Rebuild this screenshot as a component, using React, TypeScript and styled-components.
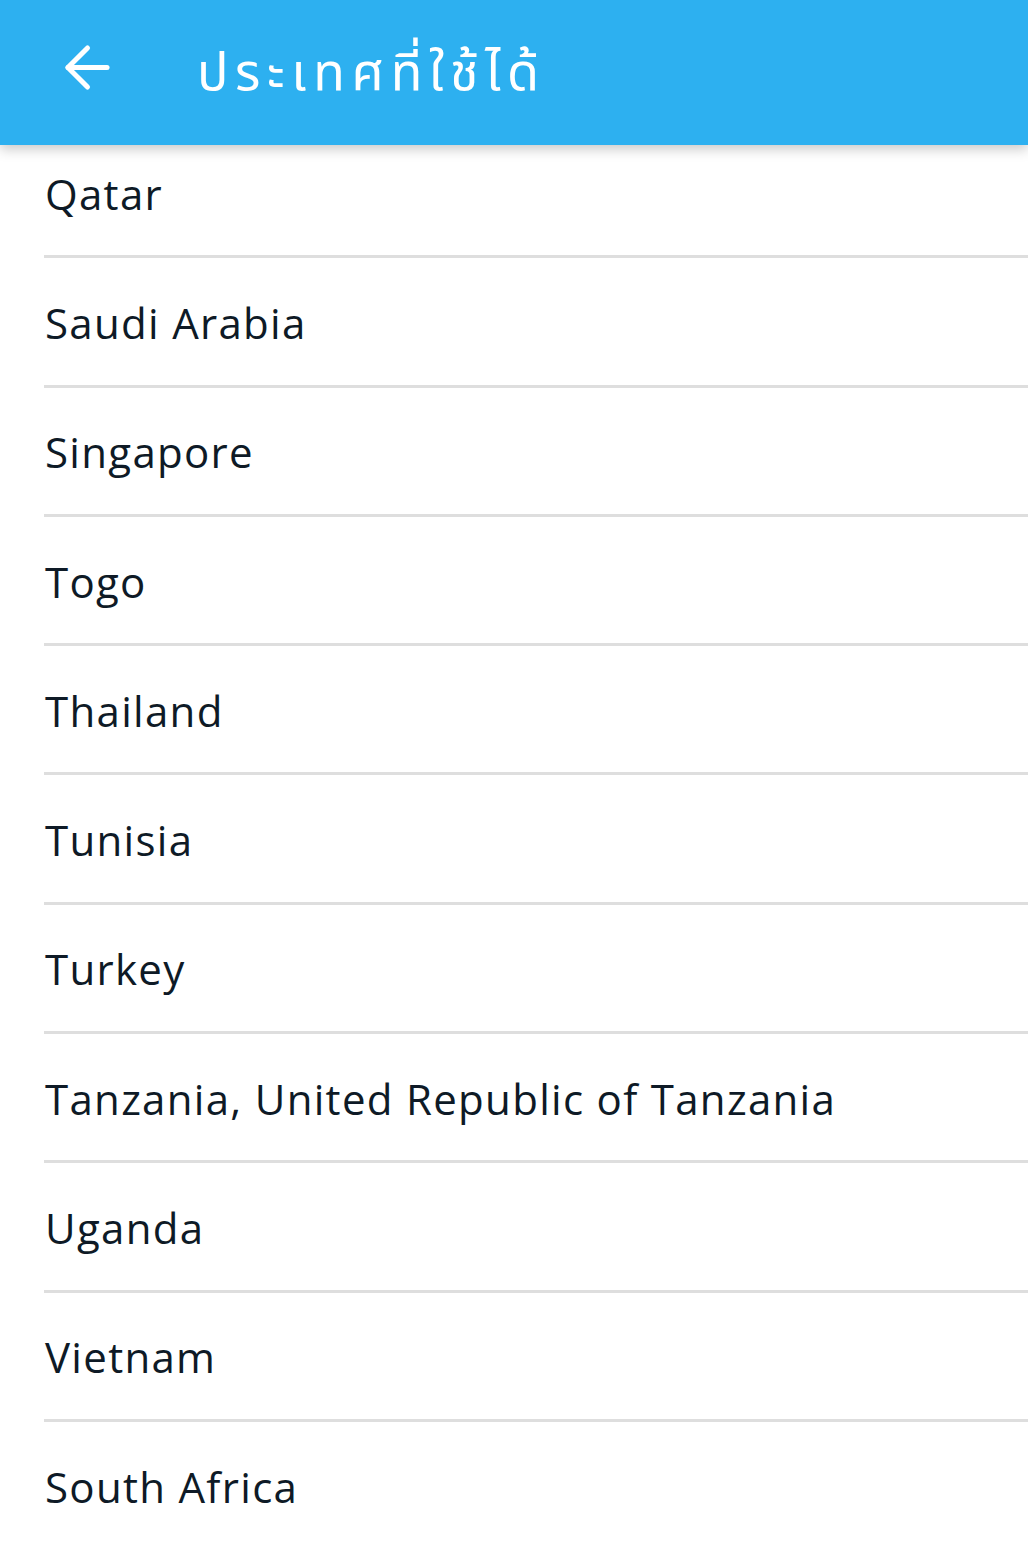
import React from 'react';
import styled, { createGlobalStyle } from 'styled-components';

const countries = [
  'Qatar',
  'Saudi Arabia',
  'Singapore',
  'Togo',
  'Thailand',
  'Tunisia',
  'Turkey',
  'Tanzania, United Republic of Tanzania',
  'Uganda',
  'Vietnam',
  'South Africa',
];

const BackArrow = () => (
  <svg
    width="67"
    height="67"
    viewBox="0 0 24 24"
    fill="none"
    stroke="#ffffff"
    strokeWidth="1.8"
    strokeLinecap="round"
    strokeLinejoin="round"
  >
    <path d="m12 19-7-7 7-7" />
    <path d="M19 12H5" />
  </svg>
);

const App = () => {
  return (
    <>
      <GlobalStyle />
      <Page>
        <Header>
          <BackButton type="button" aria-label="back">
            <BackArrow />
          </BackButton>
          <Title>ประเทศที่ใช้ได้</Title>
        </Header>
        <List>
          {countries.map(name => (
            <Row key={name}>
              <RowText>{name}</RowText>
            </Row>
          ))}
        </List>
      </Page>
    </>
  );
};

export default App;

const GlobalStyle = createGlobalStyle`
  html, body {
    margin: 0;
    padding: 0;
    background: #ffffff;
  }

  body {
    font-family: 'Open Sans', 'Noto Sans', sans-serif;
  }
`;

const Page = styled.div`
  display: flex;
  flex-direction: column;
  width: 1028px;
  height: 1543px;
  overflow: hidden;
  background: #ffffff;
`;

const Header = styled.header`
  display: flex;
  align-items: center;

  position: relative;
  z-index: 2;

  height: 145px;
  flex-shrink: 0;
  padding-left: 54px;
  box-sizing: border-box;

  background-color: #2db0f0;
  box-shadow: 0 4px 12px rgba(0, 0, 0, 0.22);
`;

const BackButton = styled.button`
  display: flex;
  align-items: center;
  justify-content: center;

  width: 67px;
  height: 67px;
  padding: 0;
  margin-top: -11px;

  border: none;
  background: none;
`;

const Title = styled.h1`
  margin: 3px 0 0 76px;

  font-family: 'Noto Sans Thai', 'Noto Sans', sans-serif;
  font-size: 52px;
  font-weight: 400;
  letter-spacing: 6.6px;
  color: #ffffff;
`;

const List = styled.ul`
  display: flex;
  flex-direction: column;

  margin: -16px 0 0 0;
  padding: 0;
  list-style: none;
`;

const Row = styled.li`
  display: flex;
  align-items: center;

  height: 129.3px;
  margin-left: 44px;
  box-sizing: border-box;

  border-bottom: 3px solid #dedede;
`;

const RowText = styled.span`
  margin-left: 1px;
  margin-top: 2px;

  font-family: 'Open Sans', 'Noto Sans', sans-serif;
  font-size: 42px;
  letter-spacing: 1.3px;
  color: #0e1a26;
`;
